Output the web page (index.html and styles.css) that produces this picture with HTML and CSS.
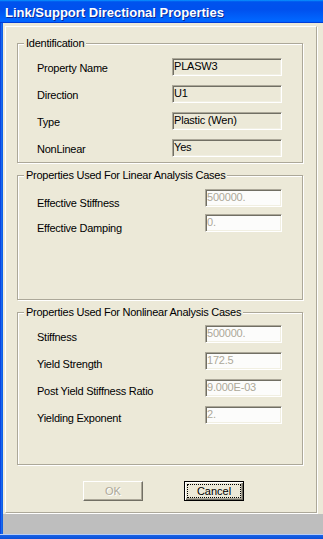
FILE: index.html
```html
<!DOCTYPE html>
<html lang="en">
<head>
<meta charset="utf-8">
<title>Link/Support Directional Properties</title>
<link rel="stylesheet" href="styles.css">
</head>
<body>
<div class="window">
  <div class="titlebar"><span class="title">Link/Support Directional Properties</span></div>
  <div class="frame">
    <div class="frame-left"></div>
    <div class="client">
      <div class="panel">
        <fieldset class="group group-ident">
          <legend>Identification</legend>
          <div class="rows rows-ident">
            <div class="row"><span class="label">Property Name</span><span class="field field-ro">PLASW3</span></div>
            <div class="row"><span class="label">Direction</span><span class="field field-ro">U1</span></div>
            <div class="row"><span class="label">Type</span><span class="field field-ro">Plastic (Wen)</span></div>
            <div class="row"><span class="label">NonLinear</span><span class="field field-ro">Yes</span></div>
          </div>
        </fieldset>
        <fieldset class="group group-linear">
          <legend>Properties Used For Linear Analysis Cases</legend>
          <div class="rows rows-linear">
            <div class="row"><span class="label">Effective Stiffness</span><span class="field field-dis">500000.</span></div>
            <div class="row"><span class="label">Effective Damping</span><span class="field field-dis">0.</span></div>
          </div>
        </fieldset>
        <fieldset class="group group-nonlinear">
          <legend>Properties Used For Nonlinear Analysis Cases</legend>
          <div class="rows rows-nonlinear">
            <div class="row"><span class="label">Stiffness</span><span class="field field-dis">500000.</span></div>
            <div class="row"><span class="label">Yield Strength</span><span class="field field-dis">172.5</span></div>
            <div class="row"><span class="label">Post Yield Stiffness Ratio</span><span class="field field-dis">9.000E-03</span></div>
            <div class="row"><span class="label">Yielding Exponent</span><span class="field field-dis">2.</span></div>
          </div>
        </fieldset>
        <div class="buttons">
          <button class="btn btn-disabled" type="button" disabled>OK</button>
          <button class="btn btn-default" type="button"><span class="focus">Cancel</span></button>
        </div>
      </div>
      <div class="statusbar"></div>
    </div>
  </div>
  <div class="frame-bottom"></div>
</div>
</body>
</html>
```
FILE: styles.css
```css
html, body {
  margin: 0;
  padding: 0;
  background: #ece9d8;
}

body {
  width: 323px;
  height: 539px;
  overflow: hidden;
  font-family: "Liberation Sans", Arial, sans-serif;
  font-size: 11px;
  color: #000;
}

.window {
  width: 323px;
  height: 539px;
  display: flex;
  flex-direction: column;
  overflow: hidden;
}

.titlebar {
  height: 23px;
  flex: none;
  box-sizing: border-box;
  padding: 2px 0 0 5px;
  display: flex;
  align-items: center;
  background: linear-gradient(180deg, #0997ff 0%, #0053ee 8%, #0050ee 40%, #0066ff 88%, #0066ff 93%, #005bff 95%, #003dd7 96%, #003dd7 100%);
}

.title {
  color: #fff;
  font-weight: bold;
  font-size: 13px;
  line-height: 15px;
  text-shadow: 1px 1px 0 #0a2a9a;
  white-space: nowrap;
}

.frame {
  flex: 1;
  display: flex;
  min-height: 0;
}

.frame-left {
  width: 3px;
  flex: none;
  background: linear-gradient(90deg, #0831d9 0%, #166aee 50%, #0b58e0 100%);
}

.client {
  flex: 1;
  display: flex;
  flex-direction: column;
  background: #ece9d8;
  padding-top: 3px;
}

.panel {
  flex: none;
  margin-left: 2px;
  width: 312px;
  height: 487px;
  box-sizing: border-box;
  border: 1px solid;
  border-color: #fff #aca899 #aca899 #fff;
  box-shadow: 1px 1px 0 #fff;
  display: flex;
  flex-direction: column;
}

.statusbar {
  flex: 1;
  margin-top: 1px;
  background: #bebebe;
}

.frame-bottom {
  height: 5px;
  flex: none;
  background: linear-gradient(180deg, #b8cdf6 0, #b8cdf6 1px, #1a63e6 1px, #0a4fd8 100%);
}

.group {
  margin: 6px 0 0 11px;
  padding: 0;
  width: 286px;
  min-width: 0;
  box-sizing: border-box;
  border: 1px solid #aca899;
  box-shadow: inset 1px 1px 0 #fff, 1px 1px 0 #fff;
}

.group legend {
  margin-left: 6px;
  padding: 0 2px;
  font-size: 11px;
  line-height: 13px;
  letter-spacing: -0.25px;
  background: #ece9d8;
  color: #000;
}

.group-ident {
  margin-top: 10px;
  height: 126px;
}

.group-linear {
  height: 131px;
}

.group-nonlinear {
  height: 159px;
}

.rows {
  display: flex;
  flex-direction: column;
  padding: 8px 20px 0 19px;
  gap: 9px;
}

.rows-linear {
  padding-top: 7px;
  gap: 7px;
}

.rows-nonlinear {
  padding-top: 6px;
}

.row {
  display: flex;
  justify-content: space-between;
  align-items: flex-start;
  height: 18px;
}

.label {
  font-size: 11px;
  line-height: 13px;
  letter-spacing: -0.25px;
  white-space: nowrap;
  padding-top: 4px;
}

.rows-linear .label {
  padding-top: 8px;
}

.rows-nonlinear .label {
  padding-top: 6px;
}

.field {
  box-sizing: border-box;
  height: 18px;
  border: 1px solid;
  border-color: #aca899 #fff #fff #aca899;
  box-shadow: inset 1px 1px 0 #716f64, inset -1px -1px 0 #f1efe2;
  padding: 1px 0 0 1px;
  font-size: 11px;
  line-height: 12px;
  letter-spacing: -0.2px;
  white-space: nowrap;
  overflow: hidden;
}

.field-ro {
  width: 110px;
  background: #ece9d8;
  color: #000;
}

.field-dis {
  width: 77px;
  background: #fcfcfb;
  color: #aca899;
}

.buttons {
  display: flex;
  gap: 41px;
  margin: 16px 0 0 77px;
}

.btn {
  width: 60px;
  height: 20px;
  box-sizing: border-box;
  margin: 0;
  padding: 0;
  font-family: "Liberation Sans", Arial, sans-serif;
  font-size: 11px;
  line-height: 12px;
  background: #ece9d8;
  border: 1px solid;
  border-color: #fff #716f64 #716f64 #fff;
  box-shadow: inset -1px -1px 0 #aca899;
  color: #000;
}

.btn-disabled {
  color: #aca899;
  text-shadow: 1px 1px 0 #fff;
}

.btn-default {
  border: 1px solid #000;
  box-shadow: inset 1px 1px 0 #fff, inset -1px -1px 0 #716f64, inset -2px -2px 0 #aca899;
  padding: 2px;
}

.focus {
  display: block;
  height: 14px;
  box-sizing: border-box;
  border: 1px dotted #000;
  line-height: 12px;
}
```
